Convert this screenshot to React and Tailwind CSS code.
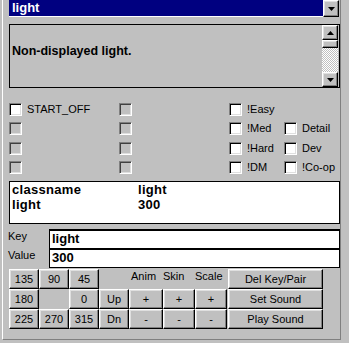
import React from "react";

const raised =
  "border border-t-white border-l-white border-b-black border-r-black shadow-[inset_-1px_-1px_0_#808080,inset_1px_1px_0_#dfdfdf] bg-[#c0c0c0]";

function Down() {
  return (
    <svg width="7" height="4" viewBox="0 0 7 4">
      <polygon points="0,0 7,0 3.5,4" fill="black" />
    </svg>
  );
}
function Up() {
  return (
    <svg width="7" height="4" viewBox="0 0 7 4">
      <polygon points="3.5,0 7,4 0,4" fill="black" />
    </svg>
  );
}

function Check({ on, label }) {
  return (
    <div className="flex items-center h-full">
      <span
        className={
          on
            ? "block w-[13px] h-[13px] border border-t-[#808080] border-l-[#808080] border-b-white border-r-white bg-white shadow-[inset_1px_1px_0_#000,inset_-1px_-1px_0_#dfdfdf]"
            : "block w-[13px] h-[13px] border border-t-[#808080] border-l-[#808080] border-b-white border-r-white bg-[#c0c0c0] shadow-[inset_1px_1px_0_#404040,inset_-1px_-1px_0_#dfdfdf]"
        }
      />
      {label && <span className="ml-[5px] text-[11px] leading-[13px] text-black">{label}</span>}
    </div>
  );
}

function Btn({ children, className = "" }) {
  return (
    <div className={`${raised} h-[20px] flex items-center justify-center text-[11px] text-black ${className}`}>
      {children}
    </div>
  );
}

export default function App() {
  const rows = [
    { a: "START_OFF", aOn: true, c: "!Easy", d: null },
    { a: "", aOn: false, c: "!Med", d: "Detail" },
    { a: "", aOn: false, c: "!Hard", d: "Dev" },
    { a: "", aOn: false, c: "!DM", d: "!Co-op" },
  ];
  const heights = ["h-[20px]", "h-[19px]", "h-[20px]", "h-[19px]"];
  return (
    <div className="w-[349px] h-[343px] bg-[#c0c0c0] overflow-hidden font-['Liberation_Sans',Arial,sans-serif]">
      <div className="ml-[2px] w-[339px] h-[340px] border-l border-l-white border-r border-r-[#808080] border-b border-b-[#808080] pl-[6px]">
        {/* combo */}
        <div className="flex h-[17px] w-[331px]">
          <div className="w-[314px] h-[17px] bg-[#000080] border-b border-b-white text-white font-bold text-[13px] leading-[16px] pl-[3px]">
            light
          </div>
          <div className={`${raised} w-[16px] h-[17px] flex items-center justify-center`}>
            <Down />
          </div>
        </div>
        {/* description */}
        <div className="mt-[7px] w-[331px] h-[64px] border border-black flex">
          <div className="flex-1 pl-[2px] pt-[19px] text-[12.5px] leading-[14px] font-bold text-black">
            Non-displayed light.
          </div>
          <div className="w-[16px] flex flex-col">
            <div className={`${raised} h-[15px] flex items-center justify-center`}>
              <Up />
            </div>
            <div className={`${raised} h-[8px]`} />
            <div className="flex-1 bg-[repeating-conic-gradient(#ffffff_0_25%,#c0c0c0_0_50%)] bg-[length:2px_2px]" />
            <div className={`${raised} h-[15px] flex items-center justify-center`}>
              <Down />
            </div>
          </div>
          <div className="w-[1px]" />
        </div>
        {/* checkboxes */}
        <div className="mt-[11px]">
          {rows.map((r, i) => (
            <div key={i} className={`flex ${heights[i]}`}>
              <div className="w-[110px]">
                <Check on={r.aOn} label={r.a} />
              </div>
              <div className="w-[110px]">
                <Check on={false} />
              </div>
              <div className="w-[55px]">
                <Check on={true} label={r.c} />
              </div>
              <div className="flex-1">{r.d && <Check on={true} label={r.d} />}</div>
            </div>
          ))}
        </div>
        {/* key/value list */}
        <div className="mt-[4px] w-[331px] h-[43px] border border-black bg-white pl-[2px] text-[13px] font-bold leading-[15px] tracking-[0.3px] text-black">
          <div className="flex">
            <span className="w-[126px]">classname</span>
            <span>light</span>
          </div>
          <div className="flex">
            <span className="w-[126px]">light</span>
            <span>300</span>
          </div>
        </div>
        {/* key / value inputs */}
        <div className="mt-[5px] w-[331px]">
          <div className="flex h-[19px]">
            <div className="w-[40px] -ml-[1px] pt-[1px] text-[11px] leading-[13px] text-black">Key</div>
            <div className="flex-1 ml-[1px] bg-white border-t-2 border-l border-r border-black pl-[2px] text-[13px] font-bold leading-[16px] text-black">
              light
            </div>
          </div>
          <div className="flex h-[20px]">
            <div className="w-[40px] -ml-[1px] pt-[1px] text-[11px] leading-[13px] text-black">Value</div>
            <div className="flex-1 ml-[1px] bg-white border-t-2 border-l border-r border-b border-black pl-[2px] text-[13px] font-bold leading-[16px] text-black">
              300
            </div>
          </div>
        </div>
        {/* buttons */}
        <div className="mt-[1px] grid grid-cols-[30px_30px_30px_30px_34px_32px_33px_95px] grid-rows-[20px_20px_20px]">
          <Btn>135</Btn>
          <Btn>90</Btn>
          <Btn>45</Btn>
          <div />
          <div className="pl-[2px] pt-[1px] text-[11px] leading-[13px] text-black">Anim</div>
          <div className="pt-[1px] text-[11px] leading-[13px] text-black">Skin</div>
          <div className="pt-[1px] text-[11px] leading-[13px] text-black">Scale</div>
          <Btn>Del Key/Pair</Btn>

          <Btn>180</Btn>
          <div />
          <Btn>0</Btn>
          <Btn>Up</Btn>
          <Btn>+</Btn>
          <Btn>+</Btn>
          <Btn className="mr-[1px]">+</Btn>
          <Btn>Set Sound</Btn>

          <Btn>225</Btn>
          <Btn>270</Btn>
          <Btn>315</Btn>
          <Btn>Dn</Btn>
          <Btn>-</Btn>
          <Btn>-</Btn>
          <Btn className="mr-[1px]">-</Btn>
          <Btn>Play Sound</Btn>
        </div>
      </div>
    </div>
  );
}
